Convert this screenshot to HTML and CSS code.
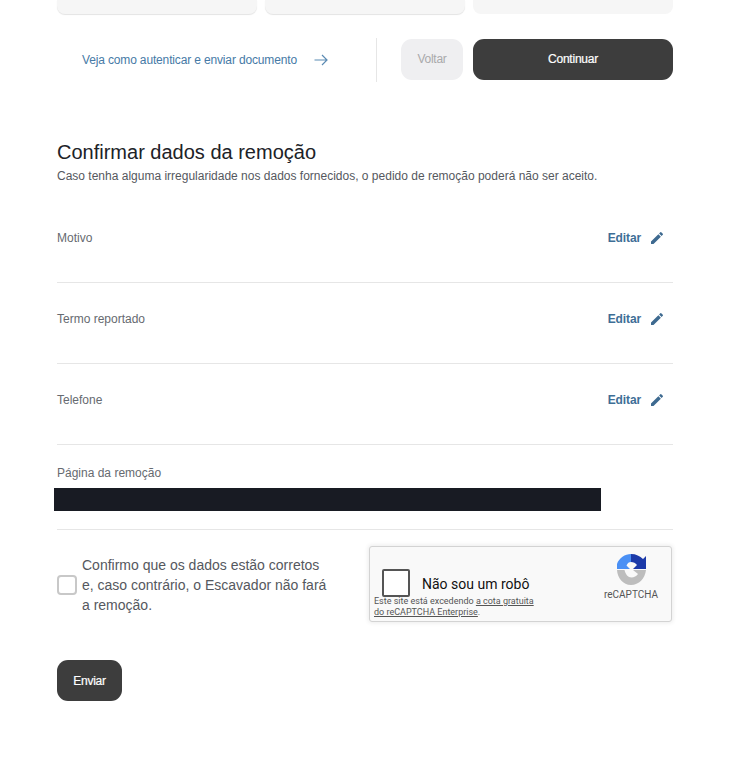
FILE: index.html
```html
<!DOCTYPE html>
<html lang="pt-BR">
<head>
<meta charset="utf-8">
<title>Confirmar dados da remoção</title>
<link rel="stylesheet" href="styles.css">
</head>
<body>
<main class="page">
  <div class="cards">
    <div class="card"></div>
    <div class="card"></div>
    <div class="card card-flat"></div>
  </div>
  <div class="actions">
    <a class="guide" href="#">
      <span>Veja como autenticar e enviar documento</span>
      <svg class="arrow" viewBox="0 0 14 12" width="14" height="12" aria-hidden="true"><path d="M0.5 6H13M8 1l5 5-5 5" fill="none" stroke="currentColor" stroke-width="1.2"/></svg>
    </a>
    <div class="divider"></div>
    <button class="btn btn-muted" type="button">Voltar</button>
    <button class="btn btn-dark btn-wide" type="button">Continuar</button>
  </div>

  <section class="confirm">
    <h1>Confirmar dados da remoção</h1>
    <p class="lead">Caso tenha alguma irregularidade nos dados fornecidos, o pedido de remoção poderá não ser aceito.</p>

    <div class="field field-first">
      <span class="label">Motivo</span>
      <a class="edit" href="#">Editar<svg viewBox="0 0 24 24" width="16" height="16" aria-hidden="true"><path d="M3 17.25V21h3.75L17.81 9.94l-3.75-3.75L3 17.25zM20.71 7.04a1 1 0 0 0 0-1.41l-2.34-2.34a1 1 0 0 0-1.41 0l-1.83 1.83 3.75 3.75 1.83-1.83z"/></svg></a>
    </div>
    <div class="field">
      <span class="label">Termo reportado</span>
      <a class="edit" href="#">Editar<svg viewBox="0 0 24 24" width="16" height="16" aria-hidden="true"><path d="M3 17.25V21h3.75L17.81 9.94l-3.75-3.75L3 17.25zM20.71 7.04a1 1 0 0 0 0-1.41l-2.34-2.34a1 1 0 0 0-1.41 0l-1.83 1.83 3.75 3.75 1.83-1.83z"/></svg></a>
    </div>
    <div class="field">
      <span class="label">Telefone</span>
      <a class="edit" href="#">Editar<svg viewBox="0 0 24 24" width="16" height="16" aria-hidden="true"><path d="M3 17.25V21h3.75L17.81 9.94l-3.75-3.75L3 17.25zM20.71 7.04a1 1 0 0 0 0-1.41l-2.34-2.34a1 1 0 0 0-1.41 0l-1.83 1.83 3.75 3.75 1.83-1.83z"/></svg></a>
    </div>
    <div class="field-page">
      <span class="label">Página da remoção</span>
      <div class="redacted"></div>
    </div>

    <div class="consent">
      <label class="check">
        <span class="box"></span>
        <span class="check-text">Confirmo que os dados estão corretos e, caso contrário, o Escavador não fará a remoção.</span>
      </label>
      <div class="recaptcha">
        <div class="rc-main">
          <span class="rc-box"></span>
          <span class="rc-text">Não sou um robô</span>
        </div>
        <div class="rc-logo">
          <svg viewBox="0 0 30 32" width="30" height="32" aria-hidden="true">
            <path d="M15 0C9 0 3 4 1 10V15H14L10.500 11.500C11.500 9 13 8 15 8Z" fill="#4a90f5"/>
            <path d="M15 0C20 0 24 2 27 5L30 2V15H17L21 11C19.500 9 17.500 8 15 8Z" fill="#1c3aa9"/>
            <path d="M1 16H8.500C9.500 20.500 12 23.500 15.500 23.500C18 23.500 20.500 22 22 20L17 16H30C29 24.500 23 31 15 31C7 31 1.500 24 1 16Z" fill="#bdbdbd"/>
          </svg>
          <span class="rc-brand">reCAPTCHA</span>
        </div>
        <div class="rc-note">
          <div>Este site está excedendo <u>a cota gratuita</u></div>
          <div><u>do reCAPTCHA Enterprise</u>.</div>
        </div>
      </div>
    </div>

    <button class="btn btn-dark btn-send" type="button">Enviar</button>
  </section>
</main>
</body>
</html>
```

FILE: styles.css
```css
* { box-sizing: border-box; }
html, body { margin: 0; padding: 0; background: #fff; }
body { font-family: "Liberation Sans", Arial, sans-serif; color: #5c5f66; }
a { text-decoration: none; }

.page { width: 744px; height: 780px; padding: 0 71px 0 57px; overflow: hidden; }

.cards { display: grid; grid-template-columns: repeat(3, 200px); gap: 8px; height: 14px; }
.card { background: #f6f6f6; border-radius: 0 0 8px 8px; box-shadow: 0 1px 1px #e4e4e4; }
.card-flat { box-shadow: none; }

.actions { display: flex; align-items: center; height: 44px; margin-top: 24px; }
.guide { display: flex; align-items: center; width: 319px; padding-left: 25px; color: #467aa6; font-size: 12px; letter-spacing: -.15px; }
.arrow { margin-left: 17px; color: #5b8bb3; }
.divider { width: 1px; height: 44px; background: #e6e6e6; margin-right: 24px; }

.btn { border: 0; font-family: inherit; font-size: 12px; height: 41px; border-radius: 11px; padding: 0; letter-spacing: -.02em; }
.btn-muted { width: 62px; background: #efeff1; color: #a9a9ab; margin: 0 10px 0 0; position: relative; top: -1px; }
.btn-dark { background: #3d3d3d; color: #fff; font-weight: 400; -webkit-text-stroke: .2px #fff; }
.btn-wide { width: 200px; position: relative; top: -1px; }

.confirm { margin-top: 59px; }
h1 { margin: 0; font-size: 20px; line-height: 23px; font-weight: 400; color: #202227; }
.lead { margin: 5px 0 0; font-size: 12px; line-height: 14px; color: #55585e; }

.field { display: flex; justify-content: space-between; align-items: flex-start; height: 81px; padding-top: 29px; border-bottom: 1px solid #e6e6e6; }
.field-first { margin-top: 8px; height: 92px; padding-top: 40px; }
.label { font-size: 12px; line-height: 14px; color: #666a70; }
.edit { display: flex; align-items: center; gap: 8px; padding-right: 8px; margin-top: -1px; font-size: 12px; line-height: 16px; font-weight: 700; letter-spacing: -.01em; color: #3e6e96; }
.edit svg { fill: #3e6a90; }

.field-page { height: 85px; padding-top: 21px; border-bottom: 1px solid #e6e6e6; }
.field-page .label { display: block; }
.redacted { width: 547px; height: 23px; margin: 8px 0 0 -3px; background: #181b23; }

.consent { display: flex; margin-top: 16px; height: 77px; }
.check { display: flex; align-items: center; width: 312px; flex: none; }
.box { width: 20px; height: 20px; flex: none; border: 2px solid #c8c8c8; border-radius: 4px; background: #fff; margin: 0 5px 0 0; }
.check-text { width: 250px; font-size: 14px; line-height: 20px; color: #55585e; }

.recaptcha { width: 303px; height: 76px; flex: none; background: #f9f9f9; border: 1px solid #d3d3d3; border-radius: 3px; box-shadow: 0 0 4px 1px rgba(0,0,0,.08); display: grid; grid-template-columns: 1fr 66px; position: relative; }
.rc-main { display: flex; align-items: center; padding: 22px 0 0 12px; height: 50px; align-self: start; }
.rc-box { width: 28px; height: 28px; border: 2px solid #555; border-radius: 2px; background: #fff; }
.rc-text { font-family: Roboto, "Liberation Sans", sans-serif; font-size: 14px; line-height: 14px; color: #111; margin-left: 12px; position: relative; top: 1px; }
.rc-logo { display: flex; flex-direction: column; align-items: center; padding-top: 7px; margin-left: -7px; margin-right: 7px; }
.rc-logo svg { margin-left: -1px; }
.rc-brand { font-family: Roboto, "Liberation Sans", sans-serif; font-size: 10px; line-height: 12px; color: #555; margin-top: 3px; }
.rc-note { position: absolute; left: 4px; top: 49px; width: 170px; font-family: Roboto, "Liberation Sans", sans-serif; font-size: 9px; line-height: 11px; color: #555; }

.btn-send { display: block; width: 65px; margin-top: 37px; }
```
